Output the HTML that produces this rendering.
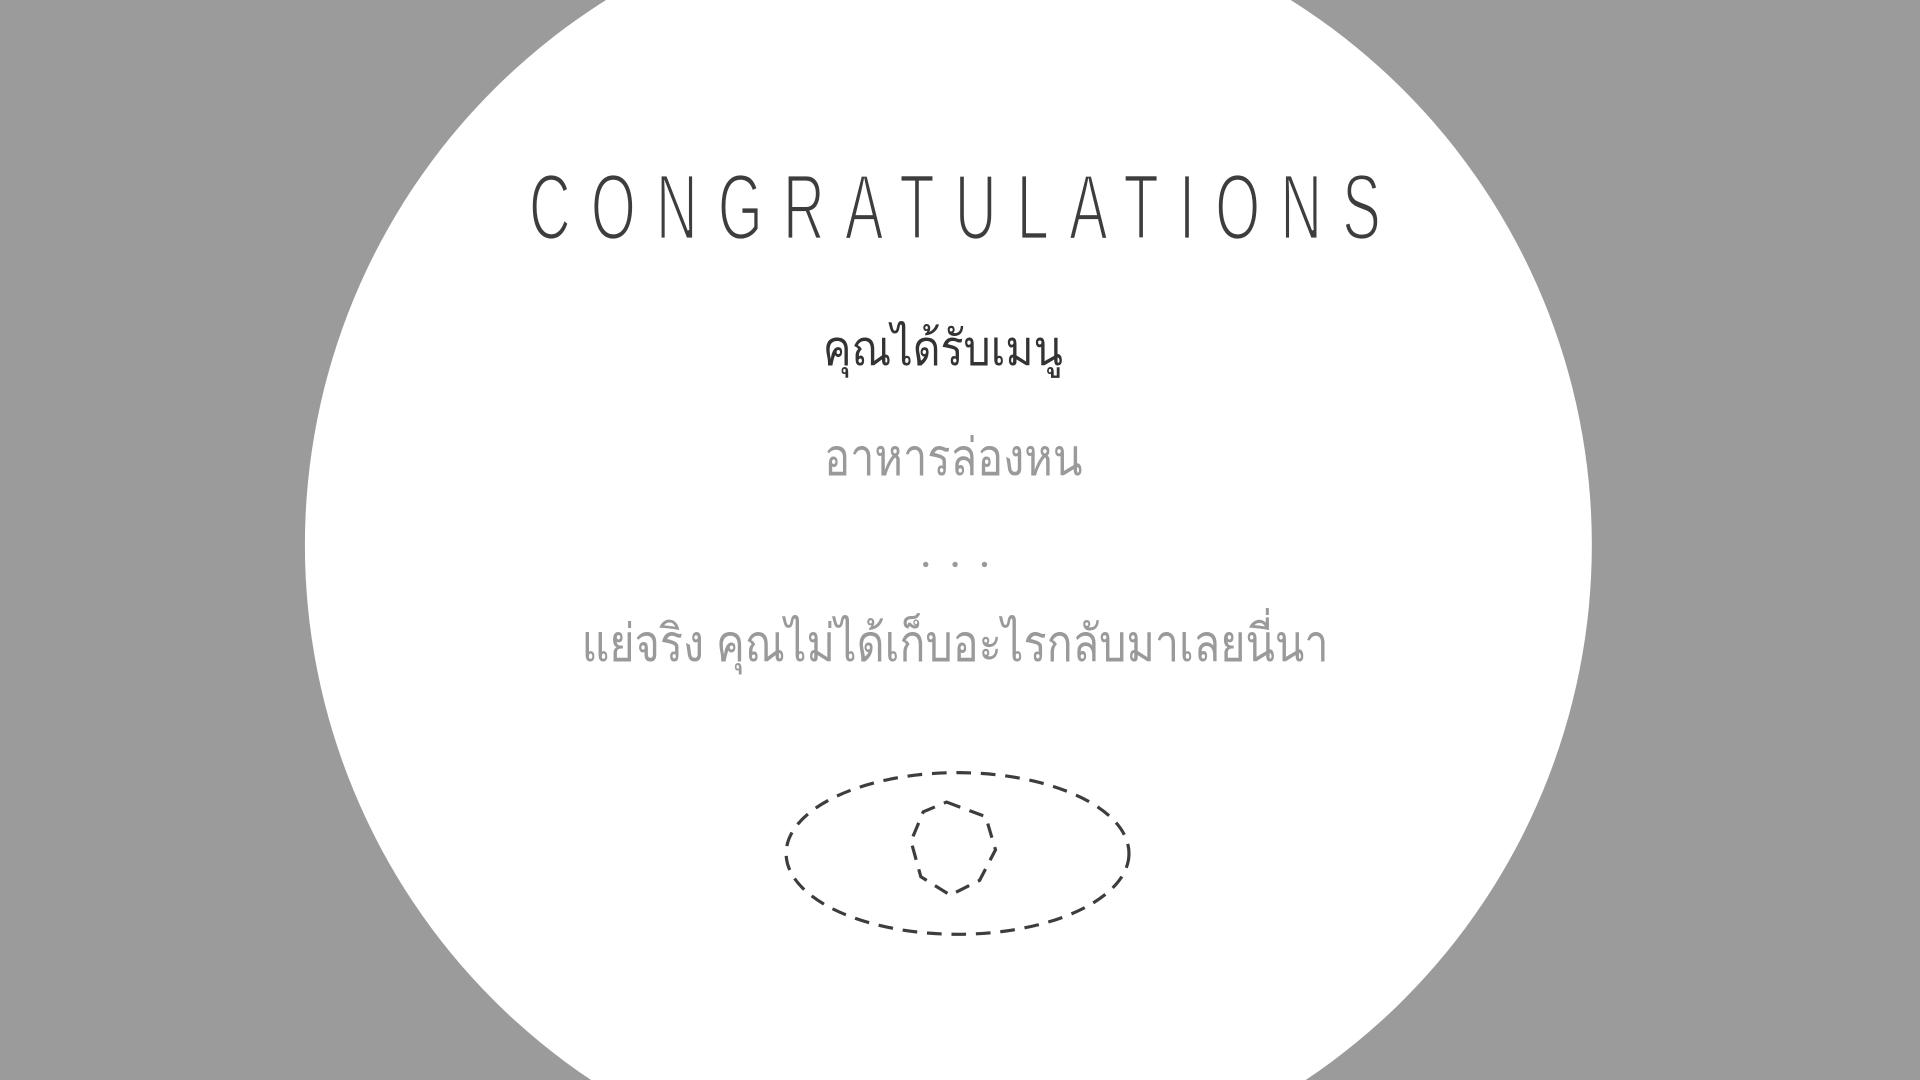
<!DOCTYPE html>
<html><head><meta charset="utf-8"><style>
html,body{margin:0;padding:0;width:1920px;height:1080px;overflow:hidden;background:#9b9b9b}
svg{display:block}
</style></head><body>
<svg width="1920" height="1080" viewBox="0 0 1568 882" xmlns="http://www.w3.org/2000/svg">
<rect width="1568" height="882" fill="#9b9b9b"/>
<circle cx="774.5" cy="445" r="525.5" fill="#fff"/>
<text transform="translate(432,195) scale(0.62,1)" font-family="Liberation Sans, sans-serif" font-size="76" fill="#3d3d3d" stroke="#fff" stroke-width="2.2" paint-order="fill" textLength="1122" lengthAdjust="spacing">CONGRATULATIONS</text>
<text x="672" y="298" font-family="Liberation Sans, sans-serif" font-size="40" fill="#333" textLength="196" lengthAdjust="spacingAndGlyphs">คุณได้รับเมนู</text>
<text x="673" y="388" font-family="Liberation Sans, sans-serif" font-size="42" fill="#9a9a9a" textLength="211" lengthAdjust="spacingAndGlyphs">อาหารล่องหน</text>
<circle cx="756" cy="461" r="2.2" fill="#9a9a9a"/>
<circle cx="780" cy="461" r="2.2" fill="#9a9a9a"/>
<circle cx="804" cy="461" r="2.2" fill="#9a9a9a"/>
<text x="475" y="540" font-family="Liberation Sans, sans-serif" font-size="42" fill="#9a9a9a" textLength="610" lengthAdjust="spacingAndGlyphs">แย่จริง คุณไม่ได้เก็บอะไรกลับมาเลยนี่นา</text>
<ellipse cx="782" cy="697" rx="140" ry="66" fill="none" stroke="#3d3d3d" stroke-width="2.6" stroke-dasharray="12 8"/>
<polygon points="773,655 805,667 813,694 800,719 776,731 752,716 744,687 754,663" fill="none" stroke="#3d3d3d" stroke-width="2.6" stroke-dasharray="12 8"/>
</svg>
</body></html>
